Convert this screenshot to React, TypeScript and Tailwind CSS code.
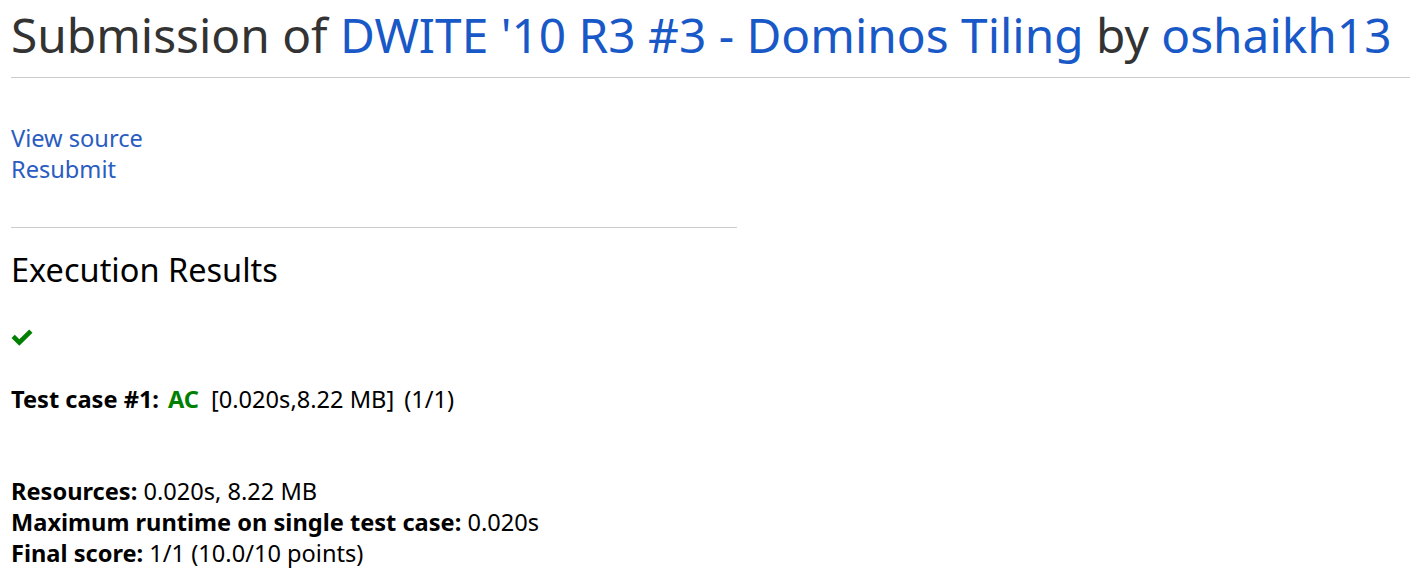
import React from 'react';

const font = { fontFamily: '"Noto Sans", "Open Sans", sans-serif' };

function Check() {
  return (
    <svg width="22" height="17" viewBox="0 0 22 17" className="block">
      <path d="M0.5 9 L3.8 5.8 L8.3 10.2 L18.2 0.5 L21.5 3.8 L8.3 16.8 Z" fill="#008000" />
    </svg>
  );
}

export default function App() {
  return (
    <div className="min-h-screen bg-white pl-[11px] text-[23.6px] leading-[31px] text-black" style={font}>
      <h2 className="pt-[5px] pb-[12px] text-[47.8px] leading-[60px] font-normal text-[#333] whitespace-nowrap">
        Submission of <a className="text-[#1958c7]">DWITE '10 R3 #3 - Dominos Tiling</a> by{' '}
        <a className="text-[#1958c7]">oshaikh13</a>
      </h2>
      <hr className="border-0 border-t border-[#ccc]" />

      <div className="mt-[45px]">
        <a className="block text-[#2a5cc1]">View source</a>
        <a className="block text-[#2a5cc1]">Resubmit</a>
      </div>

      <hr className="mt-[42px] w-[726px] border-0 border-t border-[#ccc]" />

      <h3 className="mt-[20px] text-[32.5px] leading-[44px] font-normal">Execution Results</h3>

      <div className="mt-[37px]">
        <Check />
      </div>

      <div className="mt-[38px] flex items-baseline whitespace-nowrap">
        <b className="font-bold">Test case #1:</b>
        <span className="ml-[9px] font-bold text-[#008000]">AC</span>
        <span className="ml-[12px]">[0.020s,8.22 MB]</span>
        <span className="ml-[10px]">(1/1)</span>
      </div>

      <div className="mt-[61px]">
        <div>
          <b>Resources:</b> 0.020s, 8.22 MB
        </div>
        <div>
          <b>Maximum runtime on single test case:</b> 0.020s
        </div>
        <div>
          <b>Final score:</b> 1/1 (10.0/10 points)
        </div>
      </div>
    </div>
  );
}
